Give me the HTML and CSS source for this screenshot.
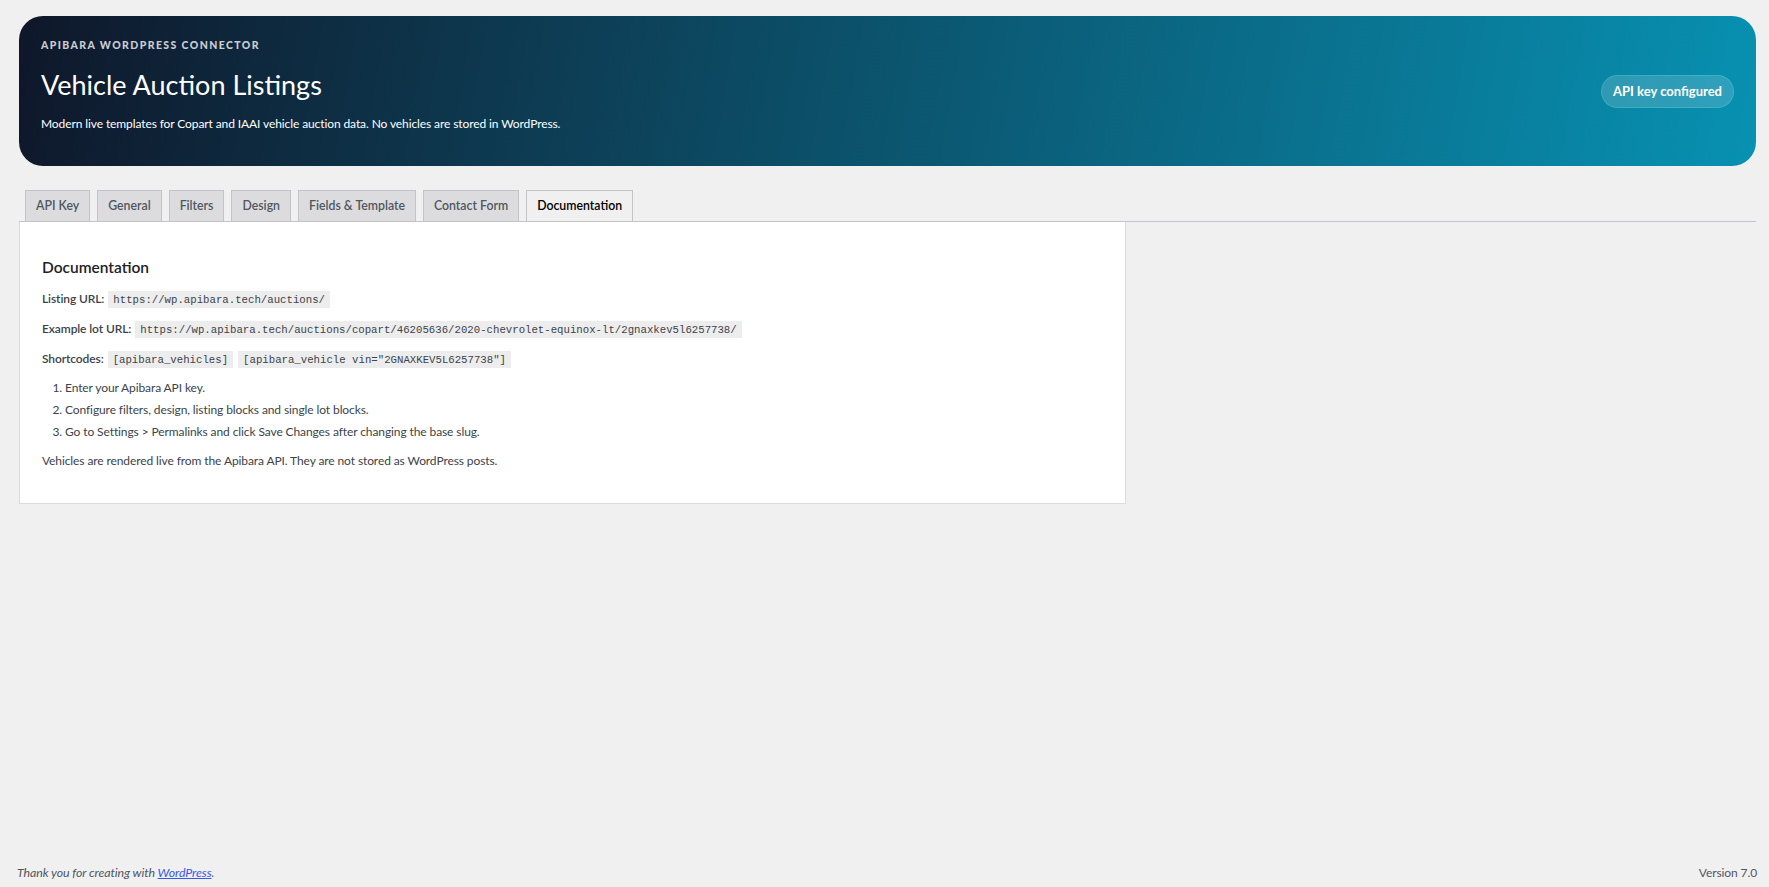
FILE: index.html
```html
<!DOCTYPE html>
<html lang="en">
<head>
    <meta charset="UTF-8">
    <meta name="viewport" content="width=device-width, initial-scale=1.0">
    <title>Vehicle Auction Listings</title>
    <link rel="stylesheet" href="styles.css">
</head>
<body>
    <div class="wrap">
        <div class="hero">
            <div class="hero-text">
                <div class="eyebrow">Apibara WordPress Connector</div>
                <h1>Vehicle Auction Listings</h1>
                <p>Modern live templates for Copart and IAAI vehicle auction data. No vehicles are stored in WordPress.</p>
            </div>
            <span class="badge">API key configured</span>
        </div>

        <nav class="tabs">
            <a class="tab" href="#">API Key</a>
            <a class="tab" href="#">General</a>
            <a class="tab" href="#">Filters</a>
            <a class="tab" href="#">Design</a>
            <a class="tab" href="#">Fields &amp; Template</a>
            <a class="tab" href="#">Contact Form</a>
            <a class="tab active" href="#">Documentation</a>
        </nav>

        <div class="panel">
            <h2>Documentation</h2>
            <p><strong>Listing URL:</strong> <code>https://wp.apibara.tech/auctions/</code></p>
            <p><strong>Example lot URL:</strong> <code>https://wp.apibara.tech/auctions/copart/46205636/2020-chevrolet-equinox-lt/2gnaxkev5l6257738/</code></p>
            <p><strong>Shortcodes:</strong> <code>[apibara_vehicles]</code> <code>[apibara_vehicle vin="2GNAXKEV5L6257738"]</code></p>
            <ol>
                <li>Enter your Apibara API key.</li>
                <li>Configure filters, design, listing blocks and single lot blocks.</li>
                <li>Go to Settings &gt; Permalinks and click Save Changes after changing the base slug.</li>
            </ol>
            <p class="note">Vehicles are rendered live from the Apibara API. They are not stored as WordPress posts.</p>
        </div>
    </div>

    <footer class="footer">
        <span class="thanks">Thank you for creating with <a href="#">WordPress</a>.</span>
        <span>Version 7.0</span>
    </footer>
</body>
</html>
```

FILE: styles.css
```css
html, body {
    height: 100%;
}

body {
    margin: 0;
    background: #f0f0f1;
    color: #3c434a;
    font-family: Lato, "Open Sans", sans-serif;
    font-size: 12px;
    letter-spacing: -0.1px;
    line-height: 1.4;
    display: flex;
    flex-direction: column;
}

.wrap {
    flex: 1;
    padding: 16px 13px 0 19px;
}

.hero {
    display: flex;
    align-items: center;
    justify-content: space-between;
    padding: 0 22px;
    border-radius: 24px;
    background: linear-gradient(100deg, #0f172a 0%, #0891b2 100%);
    color: #fff;
}

.hero-text {
    padding: 22px 0 33px;
}

.eyebrow {
    font-size: 10.5px;
    line-height: 14px;
    font-weight: 900;
    letter-spacing: 1.4px;
    text-transform: uppercase;
    color: rgba(255, 255, 255, 0.78);
}

.hero h1 {
    margin: 16px 0 0;
    font-size: 27px;
    line-height: 34px;
    font-weight: 400;
    letter-spacing: 0;
}

.hero p {
    margin: 13px 0 0;
    line-height: 18px;
}

.badge {
    padding: 7px 11px;
    border-radius: 999px;
    border: 1px solid rgba(94, 234, 212, 0.25);
    background: rgba(255, 255, 255, 0.16);
    font-size: 13px;
    font-weight: 700;
    line-height: 17px;
    letter-spacing: 0;
    white-space: nowrap;
}

.tabs {
    display: flex;
    gap: 7px;
    margin-top: 24px;
    padding-left: 6px;
    border-bottom: 1px solid #c3c4c7;
}

.tab {
    padding: 3px 10px;
    font-size: 12.3px;
    line-height: 24px;
    font-weight: 600;
    letter-spacing: 0;
    color: #50575e;
    text-decoration: none;
    background: #dcdcde;
    border: 1px solid #c3c4c7;
    border-bottom: none;
}

.tab.active {
    background: #f0f0f1;
    color: #000;
}

.panel {
    width: 1107px;
    box-sizing: border-box;
    padding: 34px 22px 32px;
    background: #fff;
    border: 1px solid #dcdcde;
    border-top: none;
}

.panel h2 {
    margin: 0 0 11px;
    font-size: 15.5px;
    line-height: 22px;
    font-weight: 600;
    letter-spacing: 0;
    color: #1d2327;
}

.panel p {
    margin: 0 0 10px;
    line-height: 20px;
}

.panel strong {
    font-weight: 600;
}

code {
    margin: 0 1px;
    padding: 3px 5px 2px;
    background: rgba(0, 0, 0, 0.07);
    font-family: Consolas, "Liberation Mono", monospace;
    font-size: 10.7px;
    line-height: 1;
    letter-spacing: 0;
}

ol {
    margin: 10px 0 10px;
    padding-left: 23px;
}

li {
    line-height: 18px;
}

li + li {
    margin-top: 4px;
}

.panel .note {
    margin: 0;
}

.footer {
    display: flex;
    justify-content: space-between;
    padding: 0 12px 5px 17px;
    line-height: 18px;
    color: #50575e;
}

.thanks {
    font-size: 12.4px;
    font-style: italic;
}

.thanks a {
    color: #3858e9;
}
```
